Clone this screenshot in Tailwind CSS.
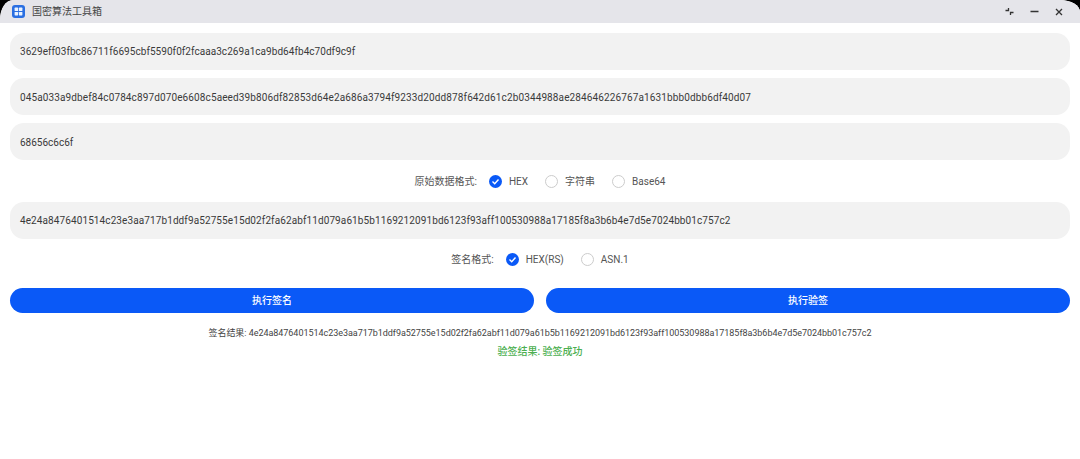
<!DOCTYPE html>
<html lang="zh-CN">
<head>
    <meta charset="UTF-8">
    <title>国密算法工具箱</title>
    <script src="https://cdn.jsdelivr.net/npm/@tailwindcss/browser@4"></script>
</head>
<body class="bg-black h-[459px] w-[1080px] overflow-hidden font-['Roboto','Noto_Sans_CJK_SC',sans-serif]">
    <div class="bg-white h-[459px] rounded-tl-[13px_20px] rounded-tr-[20px_12px] overflow-hidden">
        <!-- Title bar -->
        <div class="h-[23px] bg-[#e5e5ea] flex items-center pl-[12px] pr-[17px]">
            <svg class="w-[13px] h-[13px]" viewBox="0 0 13 13">
                <rect width="13" height="13" rx="3" fill="#2a6fe2"/>
                <rect x="2.6" y="2.6" width="3.5" height="3.5" rx=".6" fill="#eaf3ff"/>
                <rect x="6.9" y="2.6" width="3.5" height="3.5" rx=".6" fill="#eaf3ff"/>
                <rect x="2.6" y="6.9" width="3.5" height="3.5" rx=".6" fill="#eaf3ff"/>
                <rect x="6.9" y="6.9" width="3.5" height="3.5" rx=".6" fill="#eaf3ff"/>
            </svg>
            <span class="ml-[7px] text-[10px] text-[#444]">国密算法工具箱</span>
            <div class="ml-auto flex items-center gap-[16px]">
                <svg class="w-[9px] h-[9px]" viewBox="0 0 9 9" fill="none" stroke="#333" stroke-width="1.3">
                    <path d="M0.5 3.5H3.5V1M5.5 8V5.5H8.5"/>
                </svg>
                <svg class="w-[9px] h-[9px]" viewBox="0 0 9 9" fill="none" stroke="#333" stroke-width="1.3">
                    <path d="M0.5 4.5H8.5"/>
                </svg>
                <svg class="w-[8px] h-[8px]" viewBox="0 0 8 8" fill="none" stroke="#333" stroke-width="1.3">
                    <path d="M1 1L7 7M7 1L1 7"/>
                </svg>
            </div>
        </div>

        <div class="px-[10px] pt-[10px] flex flex-col text-[#3a3a3a]">
            <div class="h-[37px] rounded-[14px] bg-[#f2f2f2] flex items-center px-[10px] text-[10px] tracking-[0.05px]">3629eff03fbc86711f6695cbf5590f0f2fcaaa3c269a1ca9bd64fb4c70df9c9f</div>
            <div class="mt-[8px] h-[37px] rounded-[14px] bg-[#f2f2f2] flex items-center px-[10px] pt-[1px] text-[10px] tracking-[0.12px]">045a033a9dbef84c0784c897d070e6608c5aeed39b806df82853d64e2a686a3794f9233d20dd878f642d61c2b0344988ae284646226767a1631bbb0dbb6df40d07</div>
            <div class="mt-[8px] h-[37px] rounded-[14px] bg-[#f2f2f2] flex items-center px-[10px] pt-[1px] text-[10px]">68656c6c6f</div>

            <div class="h-[42px] flex items-center justify-center text-[10px] text-[#555]">
                <span>原始数据格式:</span>
                <span class="ml-[12px] w-[13px] h-[13px] rounded-full bg-[#0a59f7] flex items-center justify-center">
                    <svg class="w-[9px] h-[9px]" viewBox="0 0 9 9" fill="none" stroke="#fff" stroke-width="1.4"><path d="M1.5 4.6L3.7 6.7L7.5 2.5"/></svg>
                </span>
                <span class="ml-[7px]">HEX</span>
                <span class="ml-[17px] w-[13px] h-[13px] rounded-full border border-[#ccc]"></span>
                <span class="ml-[7px]">字符串</span>
                <span class="ml-[17px] w-[13px] h-[13px] rounded-full border border-[#ccc]"></span>
                <span class="ml-[7px]">Base64</span>
            </div>

            <div class="h-[37px] rounded-[14px] bg-[#f2f2f2] flex items-center px-[10px] text-[10px] tracking-[0.1px]">4e24a8476401514c23e3aa717b1ddf9a52755e15d02f2fa62abf11d079a61b5b1169212091bd6123f93aff100530988a17185f8a3b6b4e7d5e7024bb01c757c2</div>

            <div class="h-[40px] flex items-center justify-center text-[10px] text-[#555]">
                <span>签名格式:</span>
                <span class="ml-[12px] w-[13px] h-[13px] rounded-full bg-[#0a59f7] flex items-center justify-center">
                    <svg class="w-[9px] h-[9px]" viewBox="0 0 9 9" fill="none" stroke="#fff" stroke-width="1.4"><path d="M1.5 4.6L3.7 6.7L7.5 2.5"/></svg>
                </span>
                <span class="ml-[7px]">HEX(RS)</span>
                <span class="ml-[17px] w-[13px] h-[13px] rounded-full border border-[#ccc]"></span>
                <span class="ml-[7px]">ASN.1</span>
            </div>

            <div class="mt-[9px] flex gap-[12px]">
                <button class="flex-1 h-[25px] rounded-full bg-[#0a59f7] text-white text-[10px] font-medium">执行签名</button>
                <button class="flex-1 h-[25px] rounded-full bg-[#0a59f7] text-white text-[10px] font-medium">执行验签</button>
            </div>

            <p class="mt-[14px] text-center text-[9px] leading-[13px] tracking-[-0.04px] text-[#444]">签名结果: 4e24a8476401514c23e3aa717b1ddf9a52755e15d02f2fa62abf11d079a61b5b1169212091bd6123f93aff100530988a17185f8a3b6b4e7d5e7024bb01c757c2</p>
            <p class="mt-[5px] text-center text-[10px] leading-[14px] font-medium text-[#4caf50]">验签结果: 验签成功</p>
        </div>
    </div>
</body>
</html>
